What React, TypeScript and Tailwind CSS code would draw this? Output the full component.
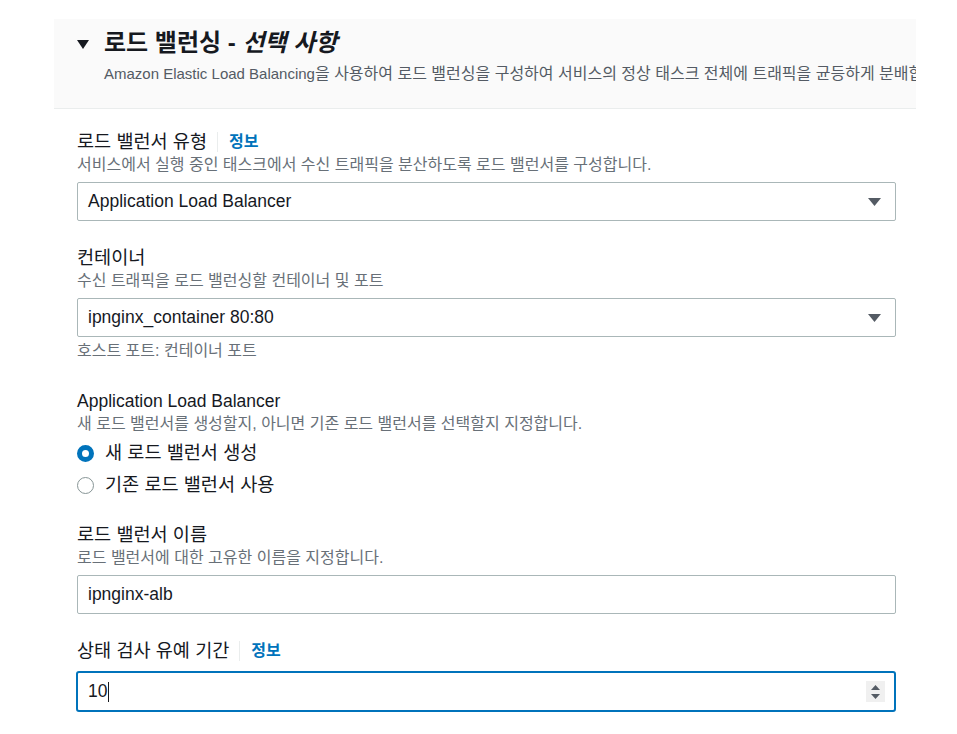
import React from "react";

const FONT = "font-['Liberation_Sans','Noto_Sans_CJK_KR',sans-serif]";

function Caret() {
  return (
    <svg width="13" height="8" viewBox="0 0 13 8">
      <polygon points="0,0 13,0 6.5,8" fill="#545b64" />
    </svg>
  );
}

function Label({ text, info, latin }: { text: string; info?: boolean; latin?: boolean }) {
  return (
    <div
      className={`flex items-center h-[24px] leading-[24px] text-[#16191f] ${
        latin ? "text-[17.5px]" : "text-[18.6px]"
      }`}
    >
      <span>{text}</span>
      {info && (
        <>
          <span className="ml-[10px] mr-[11px] h-[20px] w-px bg-[#eaeded]" />
          <span className="text-[16px] font-bold text-[#0073bb]">정보</span>
        </>
      )}
    </div>
  );
}

function Desc({ text }: { text: string }) {
  return <div className="text-[16px] leading-[22px] text-[#687078] whitespace-nowrap">{text}</div>;
}

function SelectBox({ value }: { value: string }) {
  return (
    <div className="h-[39px] border border-[#aab7b8] rounded-[2px] bg-white flex items-center justify-between pl-[10px] pr-[14px] text-[17.5px] text-[#16191f]">
      <span>{value}</span>
      <Caret />
    </div>
  );
}

function Radio({ checked, label }: { checked?: boolean; label: string }) {
  return (
    <div className="flex items-center h-[32px]">
      {checked ? (
        <span className="w-[17px] h-[17px] rounded-full border-[5px] border-[#0073bb] bg-white" />
      ) : (
        <span className="w-[17px] h-[17px] rounded-full border-[1.5px] border-[#879596] bg-white" />
      )}
      <span className="ml-[11px] text-[18.6px] leading-[24px] text-[#16191f]">{label}</span>
    </div>
  );
}

export default function App() {
  return (
    <div className={`w-[957px] h-[734px] bg-white overflow-hidden ${FONT}`}>
      <div className="h-[19px]" />
      <div className="ml-[54px] w-[862px] h-[90px] bg-[#fafafa] border-b border-[#eaeded] overflow-hidden pl-[23px] pt-[10px]">
        <div className="flex items-center h-[28px]">
          <svg width="12" height="9" viewBox="0 0 12 9" className="mr-[15px] mt-[2px]">
            <polygon points="0,0 12,0 6,9" fill="#16191f" />
          </svg>
          <h2 className="text-[24px] leading-[28px] font-bold text-[#16191f] whitespace-nowrap">
            로드 밸런싱 - <i>선택 사항</i>
          </h2>
        </div>
        <p className="ml-[27px] mt-[6px] leading-[22px] text-[#545b64] whitespace-nowrap">
          <span className="text-[15px]">Amazon Elastic Load Balancing</span>
          <span className="text-[16px]">
            을 사용하여 로드 밸런싱을 구성하여 서비스의 정상 태스크 전체에 트래픽을 균등하게 분배합니다.
          </span>
        </p>
      </div>

      <div className="ml-[77px] w-[819px] pt-[21px]">
        <div>
          <Label text="로드 밸런서 유형" info />
          <Desc text="서비스에서 실행 중인 태스크에서 수신 트래픽을 분산하도록 로드 밸런서를 구성합니다." />
          <div className="mt-[6px]">
            <SelectBox value="Application Load Balancer" />
          </div>
        </div>

        <div className="mt-[25px]">
          <Label text="컨테이너" />
          <Desc text="수신 트래픽을 로드 밸런싱할 컨테이너 및 포트" />
          <div className="mt-[6px]">
            <SelectBox value="ipnginx_container 80:80" />
          </div>
          <div className="mt-[3px]">
            <Desc text="호스트 포트: 컨테이너 포트" />
          </div>
        </div>

        <div className="mt-[27px]">
          <Label text="Application Load Balancer" latin />
          <Desc text="새 로드 밸런서를 생성할지, 아니면 기존 로드 밸런서를 선택할지 지정합니다." />
          <div className="mt-[2px]">
            <Radio checked label="새 로드 밸런서 생성" />
            <Radio label="기존 로드 밸런서 사용" />
          </div>
        </div>

        <div className="mt-[22px]">
          <Label text="로드 밸런서 이름" />
          <Desc text="로드 밸런서에 대한 고유한 이름을 지정합니다." />
          <div className="mt-[6px] h-[39px] border border-[#aab7b8] rounded-[2px] bg-white flex items-center pl-[10px] text-[17.5px] text-[#16191f]">
            ipnginx-alb
          </div>
        </div>

        <div className="mt-[25px]">
          <Label text="상태 검사 유예 기간" info />
          <div className="mt-[8px] -ml-px w-[820px] h-[41px] border-2 border-[#0073bb] rounded-[3px] bg-white flex items-center justify-between pl-[10px] pr-[9px] text-[17.5px] text-[#16191f]">
            <span className="flex items-center">
              10
              <span className="ml-[1px] w-px h-[20px] bg-[#16191f]" />
            </span>
            <span className="w-[19px] h-[21px] bg-[#f0f0f0] flex items-center justify-center">
              <svg width="9" height="14" viewBox="0 0 9 14">
                <polygon points="4.5,0 9,5 0,5" fill="#545b64" />
                <polygon points="0,9 9,9 4.5,14" fill="#545b64" />
              </svg>
            </span>
          </div>
        </div>
      </div>
    </div>
  );
}
